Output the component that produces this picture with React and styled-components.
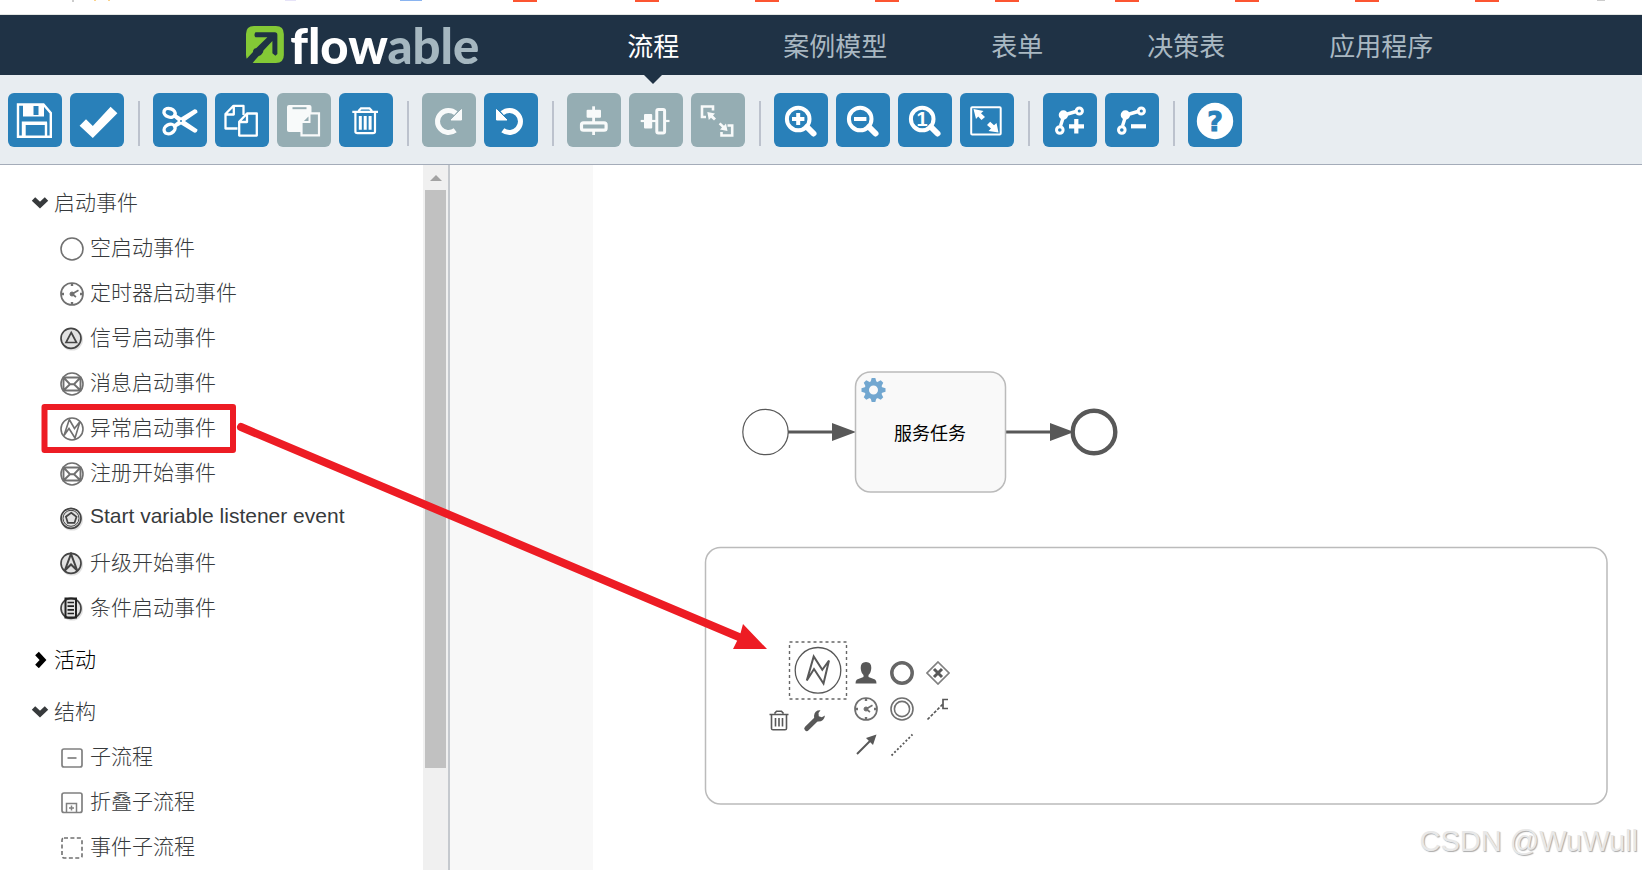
import React from 'react'
import styled, { createGlobalStyle, css } from 'styled-components'

const GlobalStyle = createGlobalStyle`
  *,
  *::before,
  *::after {
    box-sizing: border-box;
  }

  body {
    margin: 0;
    background: #fff;
    color: #373a3c;
    font-family: 'Liberation Sans', 'Noto Sans CJK SC', sans-serif;
    overflow: hidden;
  }

  button {
    padding: 0;
    border: 0;
    background: none;
    color: inherit;
    font: inherit;
    cursor: pointer;
  }
`

const INK = '#585858'
const RED = '#ed1c24'

/* Toolbar drawings, all on a 54 x 54 grid */

const Lens = ({ children }) => (
  <>
    <circle cx="24.2" cy="26" r="11.3" fill="none" stroke="#fff" strokeWidth="4" />
    <path d="M33 34L39.5 40.5" stroke="#fff" strokeWidth="6" strokeLinecap="round" />
    {children}
  </>
)

const Bend = () => (
  <g fill="none" stroke="#fff" strokeWidth="3">
    <path d="M33 18.5L21 22L17.5 33" strokeWidth="3.4" />
    <circle cx="36.3" cy="18" r="3.1" />
    <circle cx="20.4" cy="22" r="3.2" fill="#fff" />
    <circle cx="16.8" cy="37" r="3.3" />
  </g>
)

const Turn = () => (
  <>
    <path
      d="M33.2 37.2A11 11 0 1 1 33.8 20.2"
      fill="none"
      stroke="#fff"
      strokeWidth="5"
    />
    <path d="M39.5 16.5V27H29z" fill="#fff" stroke="#fff" strokeLinejoin="round" />
  </>
)

const toolIcons = {
  save: (
    <g fill="none" stroke="#fff" strokeWidth="2.4">
      <path d="M10 11.5H35.5L42.8 20V43.8H10z" />
      <path d="M15 11H36V23.5H15z" fill="#fff" stroke="none" />
      <path d="M25.5 13H30.5V22H25.5z" fill="#2980b9" stroke="none" />
      <path d="M16.5 44V30.8H38V44M15 44V29.6H39" />
    </g>
  ),
  check: <path d="M9.6 32.7L16 26.3L22.8 33L40.6 13.7L47.4 20.3L22.8 45z" fill="#fff" />,
  cut: (
    <>
      <g fill="none" stroke="#fff" strokeWidth="3.4">
        <ellipse cx="16.6" cy="19.8" rx="5.8" ry="4.2" transform="rotate(20 16.6 19.8)" />
        <ellipse cx="16.6" cy="36" rx="5.8" ry="4.4" transform="rotate(-28 16.6 36)" />
      </g>
      <path
        d="M21 20L28 24.5L41 16.4Q44.5 16 44.5 19.5L32 28L44.5 36.5Q44.5 40 41 39.6L28 31.5L21 35.5L19.5 32.5L25 28L19.5 23.5z"
        fill="#fff"
      />
      <circle cx="28" cy="28" r="1" fill="#2980b9" />
    </>
  ),
  copy: (
    <g fill="none" stroke="#fff" strokeWidth="2.3" strokeLinejoin="round">
      <path d="M22.5 35.5H10.5V21L18.5 12.8H28.5V22M11 21.5H18.8V13.5" />
      <path d="M24.2 28.8L32 20.5H41.8V42.6H24.2zM24.5 29H32V21" />
    </g>
  ),
  paste: (
    <>
      <rect x="10" y="12" width="24.5" height="27" rx="2" fill="#fff" />
      <path d="M15.5 15.2H29.5" stroke="#95adb3" strokeWidth="2" />
      <path
        d="M24.5 28L32 20.3H42V42.3H24.5z"
        fill="#95adb3"
        stroke="#fff"
        strokeWidth="2.2"
      />
      <path d="M24.5 29H32.5V21z" fill="#95adb3" stroke="#fff" strokeWidth="2" />
    </>
  ),
  trash: (
    <g fill="none" stroke="#fff" strokeWidth="2.2">
      <path d="M13.3 18.8H39M16.4 19V38.5Q16.4 40.2 18.5 40.2H34Q36 40.2 36 38.5V19M19.5 18L22 15.3H30.5L33 18" />
      <path d="M21.3 23V36.8M26.2 23V36.8M31.1 23V36.8" strokeWidth="3" />
    </g>
  ),
  redo: <Turn />,
  undo: (
    <g transform="translate(52 0) scale(-1 1)">
      <Turn />
    </g>
  ),
  alignVertical: (
    <>
      <path d="M26.6 13.3V42" stroke="#fff" strokeWidth="2.8" />
      <rect x="19.6" y="16.7" width="14.4" height="8" rx="1" fill="#fff" />
      <rect x="14.5" y="29.8" width="24.6" height="7.4" rx="2" fill="#95adb3" stroke="#fff" strokeWidth="3.2" />
    </>
  ),
  alignHorizontal: (
    <>
      <path d="M11.7 28H40.5" stroke="#fff" strokeWidth="2.2" />
      <rect x="15" y="21" width="8.2" height="14.4" rx="1" fill="#fff" />
      <rect x="27.8" y="16.5" width="7.8" height="23.4" rx="1.5" fill="#95adb3" stroke="#fff" strokeWidth="3" />
    </>
  ),
  sameSize: (
    <g fill="#fff">
      <path
        d="M15 24H11V13.5H22V17.5M36.5 32.5H41.2V42.5H30.5V39"
        fill="none"
        stroke="#fff"
        strokeWidth="2.6"
      />
      <path d="M16.3 19L24 20.5L22 22.5L25 25.5L23 27.5L20 24.7L17.8 27z" />
      <path d="M36.5 38L29 36.5L31 34.5L27.7 31.3L29.5 29.5L33 32.7L35 30.5z" />
    </g>
  ),
  zoomIn: (
    <Lens>
      <path d="M18 26H30.4M24.2 20V32" stroke="#fff" strokeWidth="4" />
    </Lens>
  ),
  zoomOut: (
    <Lens>
      <path d="M18 26H30.4" stroke="#fff" strokeWidth="4" />
    </Lens>
  ),
  zoomActual: (
    <Lens>
      <text x="24" y="33" fontSize="20" fontWeight="700" textAnchor="middle" fill="#fff">
        1
      </text>
    </Lens>
  ),
  zoomFit: (
    <g fill="#fff">
      <rect x="11.2" y="14.2" width="29.5" height="27.4" rx="1" fill="none" stroke="#fff" strokeWidth="2" />
      <path d="M13.5 16L23.5 18L21 20.2L25 24L21.5 27L18.2 23.5L16 26z" />
      <path d="M38.5 39.5L28.5 38L31 35.5L27 32L30.2 28.8L34 32.2L36.5 30z" />
    </g>
  ),
  bendAdd: (
    <>
      <Bend />
      <path d="M26 33.3H41M33.3 26V40.5" stroke="#fff" strokeWidth="4.2" />
    </>
  ),
  bendRemove: (
    <>
      <Bend />
      <path d="M26 33.3H41" stroke="#fff" strokeWidth="4.2" />
    </>
  ),
  help: (
    <>
      <circle cx="27" cy="28" r="18.2" fill="#fff" />
      <text
        x="27"
        y="37.5"
        fontSize="27"
        fontWeight="700"
        fontFamily="DejaVu Sans"
        textAnchor="middle"
        fill="#2980b9"
        stroke="#2980b9"
      >
        ?
      </text>
    </>
  ),
}

/* Shape drawings, all on a 24 x 24 grid */

const ShadedRing = ({ children }) => (
  <g fill="none" stroke="#444" strokeWidth="1.7">
    <circle cx="12" cy="12.6" r="11" fill="#ccc" stroke="none" opacity="0.6" />
    <circle cx="11" cy="11.3" r="10" fill="#e2e2e2" />
    {children}
  </g>
)

const Envelope = () => (
  <g fill="none" stroke="#707070" strokeWidth="1.6">
    <circle cx="12" cy="12" r="11" />
    <path
      d="M3.5 5.5H20.5V18.5H3.5zM3.5 5.5L10 12.2H14L20.5 5.5M3.5 18.5L10 12.2M20.5 18.5L14 12.2"
      strokeWidth="1.9"
    />
  </g>
)

const shapeIcons = {
  none: <circle cx="12" cy="12" r="11" fill="none" stroke="#707070" strokeWidth="1.6" />,
  timer: (
    <g fill="none" stroke="#707070">
      <circle cx="12" cy="12" r="11" strokeWidth="1.7" />
      <path d="M12 1V4M12 20V23M1 12H4M20 12H23" strokeWidth="2.4" />
      <path d="M12 12L18.5 8.2M12 12L16 15" strokeWidth="1.6" />
      <circle cx="12" cy="12" r="2" fill="#707070" />
    </g>
  ),
  signal: (
    <ShadedRing>
      <path d="M11.2 5.5L16.5 15.5H6z" />
    </ShadedRing>
  ),
  message: <Envelope />,
  error: (
    <g fill="none" stroke="#707070" strokeWidth="1.6">
      <circle cx="12" cy="12" r="11" />
      <path d="M4 18.5L9.3 2.5L14.5 11.5L20 4.5L15 21L9 11.5z" />
    </g>
  ),
  variable: (
    <ShadedRing>
      <circle cx="11" cy="11.3" r="8" strokeWidth="1" />
      <path d="M11.2 5.8L16.5 9.7L14.5 15.8H7.8L5.9 9.7z" />
    </ShadedRing>
  ),
  escalation: (
    <ShadedRing>
      <path d="M11 1.8L17.2 18.5L11 12.5L4.8 18.5z" strokeWidth="2" />
    </ShadedRing>
  ),
  conditional: (
    <ShadedRing>
      <rect x="5.5" y="1.5" width="10.5" height="19" stroke="#222" strokeWidth="2" />
      <path d="M7.5 5.5H14M7.5 9.2H14M7.5 12.8H14M7.5 16.5H14" stroke="#222" />
    </ShadedRing>
  ),
  subProcess: (
    <g fill="none" stroke="#808080" strokeWidth="1.7">
      <rect x="2" y="3" width="20" height="18" rx="2" />
      <path d="M7.5 12H16.5" />
    </g>
  ),
  collapsed: (
    <g fill="none" stroke="#808080" strokeWidth="1.7">
      <rect x="2" y="2" width="20" height="19.5" rx="2" />
      <path d="M6.5 21V12.5H16.5V21M11.5 14.5V19.5M9 17H14" strokeWidth="1.5" />
    </g>
  ),
  eventSubProcess: (
    <rect
      x="2"
      y="2"
      width="20"
      height="20"
      rx="2"
      fill="none"
      stroke="#707070"
      strokeWidth="1.6"
      strokeDasharray="4 2.4"
    />
  ),
  user: (
    <path
      d="M12 1Q17.5 1 17.3 7Q17 12 14.5 14V16L21 18.5Q22.5 19.5 22.5 22.5H1.5Q1.5 19.5 3 18.5L9.5 16V14Q7 12 6.7 7Q6.5 1 12 1z"
      fill={INK}
    />
  ),
  end: <circle cx="12" cy="12" r="10.2" fill="none" stroke="#666" strokeWidth="3.5" />,
  gateway: (
    <g fill="none" stroke="#808080" strokeWidth="1.7">
      <path d="M12 1L23 12L12 23L1 12z" />
      <path d="M8 8L16 16M16 8L8 16" stroke={INK} strokeWidth="3" />
    </g>
  ),
  intermediate: (
    <g fill="none" stroke="#707070" strokeWidth="1.6">
      <circle cx="12" cy="12" r="11" />
      <circle cx="12" cy="12" r="7.6" />
    </g>
  ),
  annotation: (
    <g fill="none" stroke={INK} strokeWidth="1.7">
      <path d="M22 2.5H17V11.5H22" />
      <path d="M1.5 22.5L17 7" strokeDasharray="3 1.6" />
    </g>
  ),
  flow: (
    <>
      <path d="M3 21L16 8" stroke={INK} strokeWidth="2" />
      <path d="M22.5 1.5L12 5L19 12z" fill={INK} />
    </>
  ),
  association: (
    <path d="M1.5 22.5L22.5 1.5" stroke={INK} strokeWidth="1.8" strokeDasharray="2 2" />
  ),
  remove: (
    <g fill="none" stroke={INK} strokeWidth="1.6">
      <path d="M2.5 5.5H21.5M4.5 6V19.5Q4.5 20.8 6 20.8H18Q19.5 20.8 19.5 19.5V6M7.5 4.5L9.5 2.2H14.5L16.5 4.5" />
      <path d="M8.5 9V17.5M12 9V17.5M15.5 9V17.5" />
    </g>
  ),
  wrench: (
    <>
      <path d="M3.8 19.5L13.5 10" stroke={INK} strokeWidth="5" strokeLinecap="round" />
      <path
        d="M17.5 1.3Q11.5 1 11 7L11.5 10.5L14.5 12.5Q21 13 22 6.5L18.8 8.3L15.8 7.3L15.5 4z"
        fill={INK}
      />
    </>
  ),
}

const Drawing = ({ name }) => (
  <svg width="24" height="24" viewBox="0 0 24 24" aria-hidden="true">
    {shapeIcons[name]}
  </svg>
)

const toolGroups = [
  [
    { icon: 'save', label: '保存' },
    { icon: 'check', label: '校验' },
  ],
  [
    { icon: 'cut', label: '剪切' },
    { icon: 'copy', label: '复制' },
    { icon: 'paste', label: '粘贴', disabled: true },
    { icon: 'trash', label: '删除' },
  ],
  [
    { icon: 'redo', label: '重做', disabled: true },
    { icon: 'undo', label: '撤销' },
  ],
  [
    { icon: 'alignVertical', label: '垂直对齐', disabled: true },
    { icon: 'alignHorizontal', label: '水平对齐', disabled: true },
    { icon: 'sameSize', label: '相同大小', disabled: true },
  ],
  [
    { icon: 'zoomIn', label: '放大' },
    { icon: 'zoomOut', label: '缩小' },
    { icon: 'zoomActual', label: '实际大小' },
    { icon: 'zoomFit', label: '适合大小' },
  ],
  [
    { icon: 'bendAdd', label: '添加弯曲点' },
    { icon: 'bendRemove', label: '删除弯曲点' },
  ],
  [{ icon: 'help', label: '帮助' }],
]

const palette = [
  {
    title: '启动事件',
    open: true,
    items: [
      ['none', '空启动事件'],
      ['timer', '定时器启动事件'],
      ['signal', '信号启动事件'],
      ['message', '消息启动事件'],
      ['error', '异常启动事件'],
      ['message', '注册开始事件'],
      ['variable', 'Start variable listener event'],
      ['escalation', '升级开始事件'],
      ['conditional', '条件启动事件'],
    ],
  },
  { title: '活动', open: false, items: [] },
  {
    title: '结构',
    open: true,
    items: [
      ['subProcess', '子流程'],
      ['collapsed', '折叠子流程'],
      ['eventSubProcess', '事件子流程'],
    ],
  },
]

const quickActions = [
  { icon: 'user', x: 261, y: 496 },
  { icon: 'end', x: 297, y: 496 },
  { icon: 'gateway', x: 333, y: 496 },
  { icon: 'timer', x: 261, y: 532 },
  { icon: 'intermediate', x: 297, y: 532 },
  { icon: 'annotation', x: 333, y: 532 },
  { icon: 'flow', x: 261, y: 568 },
  { icon: 'association', x: 297, y: 568 },
  { icon: 'remove', x: 174, y: 544 },
  { icon: 'wrench', x: 210, y: 544 },
]

const Chevron = ({ open }) => (
  <svg width="18" height="18" viewBox="0 0 18 18" aria-hidden="true">
    <path
      d={open ? 'M2.5 6L9 12L15.5 6' : 'M6 3.5L12 10L6 16.5'}
      fill="none"
      stroke="currentColor"
      strokeWidth="5"
    />
  </svg>
)

const gearTeeth = [0, 45, 90, 135, 180, 225, 270, 315]

const Gear = () => (
  <g transform="translate(280.5 225)">
    <circle r="6.8" fill="none" stroke="#72a7d0" strokeWidth="4.6" />
    {gearTeeth.map((angle) => (
      <path
        key={angle}
        d="M-3 -8L-1.8 -12H1.8L3 -8z"
        fill="#72a7d0"
        transform={`rotate(${angle})`}
      />
    ))}
  </g>
)

const Diagram = () => (
  <DiagramSvg>
    <g fill="none" stroke={INK}>
      <circle cx="172.5" cy="267" r="22.7" strokeWidth="1.2" fill="#fff" />
      <circle cx="501" cy="267" r="21.3" strokeWidth="4.4" fill="#fff" />
      <path d="M195 267H240M412 267H458" strokeWidth="3" />
    </g>
    <path d="M239 258L263 267L239 276zM457 258L481 267L457 276z" fill={INK} />
    <rect x="262.5" y="207" width="150" height="120" rx="15" fill="#f9f9f9" stroke="#bbb" strokeWidth="1.5" />
    <Gear />
    <text x="337" y="275" fontSize="18" textAnchor="middle" fill="#000">
      服务任务
    </text>
    <rect x="112.5" y="382.5" width="901.5" height="256.5" rx="15" fill="none" stroke="#bbb" strokeWidth="1.5" />
    <rect
      x="196.5"
      y="477"
      width="57"
      height="57"
      fill="none"
      stroke="#666"
      strokeWidth="1.4"
      strokeDasharray="3 3"
    />
    <circle cx="225" cy="505.3" r="22.8" fill="#fff" stroke={INK} strokeWidth="1.3" />
    <path
      d="M213.8 515.5L220.7 491.5L229.3 504.8L236 495.5L230.5 518.5L221 504z"
      fill="none"
      stroke={INK}
      strokeWidth="2"
    />
  </DiagramSvg>
)

const Logo = () => (
  <LogoLink href="#/processes" aria-label="flowable">
    <svg width="39" height="38" viewBox="0 0 39 38" aria-hidden="true">
      <path
        d="M8 0H30Q38 0 38 8V29Q38 37 30 37H8Q0 37 0 29V8Q0 0 8 0z"
        fill="#84c936"
      />
      <path
        d="M9.5 6.3H29Q31.5 6.3 31.5 9V28L29.5 29.7L26.5 27.3V15L17.5 24.5L17 26.5Q15.5 29.5 12.5 30.2L5.8 38H0V33.5L7 26Q7 22.8 10.4 22L21.5 11.2H9.5Q7.5 9 9.5 6.3z"
        fill="#1f3245"
      />
    </svg>
    <Wordmark>
      flow<span>able</span>
    </Wordmark>
  </LogoLink>
)

export default function App() {
  return (
    <Page>
      <GlobalStyle />
      <BrowserStrip aria-hidden="true">
        <svg width="100%" height="2">
          <path d="M72 0H74V2H72zM1597 0H1605V1H1597z" fill="#ccc" />
          <path d="M94 0H96V1H94zM108 0H110V1H108z" fill="#fbd38b" />
          <path d="M285 0H296V1H285z" fill="#e6e3f8" />
          <path d="M400 0H422V1H400z" fill="#8ab4f0" />
          {[...Array(9).keys()].map((i) => (
            <rect key={i} x={513 + i * 120 + (i ? 2 : 0)} width="24" height="2" fill="#fc5531" />
          ))}
        </svg>
      </BrowserStrip>

      <Header>
        <Logo />
        <Nav>
          <NavLink href="#/processes" $active>
            流程
          </NavLink>
          <NavLink href="#/casemodels">案例模型</NavLink>
          <NavLink href="#/forms">表单</NavLink>
          <NavLink href="#/decisions">决策表</NavLink>
          <NavLink href="#/apps">应用程序</NavLink>
        </Nav>
      </Header>

      <Toolbar role="toolbar">
        {toolGroups.map((group, i) => (
          <React.Fragment key={group[0].icon}>
            {i > 0 && <Separator />}
            <ToolGroup>
              {group.map((tool) => (
                <ToolButton
                  key={tool.icon}
                  type="button"
                  aria-label={tool.label}
                  disabled={tool.disabled}
                >
                  <svg width="54" height="54" viewBox="0 0 54 54" aria-hidden="true">
                    {toolIcons[tool.icon]}
                  </svg>
                </ToolButton>
              ))}
            </ToolGroup>
          </React.Fragment>
        ))}
      </Toolbar>

      <Editor>
        <Palette>
          {palette.map((section) => (
            <section key={section.title}>
              <SectionTitle type="button" aria-expanded={section.open} $open={section.open}>
                <Chevron open={section.open} />
                <Label>{section.title}</Label>
              </SectionTitle>
              {section.open && (
                <ShapeList>
                  {section.items.map(([icon, label]) => (
                    <ShapeItem key={label}>
                      <Drawing name={icon} />
                      <Label>{label}</Label>
                    </ShapeItem>
                  ))}
                </ShapeList>
              )}
            </section>
          ))}
        </Palette>
        <ScrollTrack aria-hidden="true">
          <ScrollArrow />
          <ScrollRail>
            <ScrollThumb />
          </ScrollRail>
        </ScrollTrack>
        <Canvas>
          <Paper>
            <Diagram />
            {quickActions.map(({ icon, x, y }) => (
              <QuickAction key={icon} type="button" aria-label={icon} $x={x} $y={y}>
                <Drawing name={icon} />
              </QuickAction>
            ))}
          </Paper>
        </Canvas>
        <Annotation aria-hidden="true">
          <rect
            x="44.5"
            y="242"
            width="188.5"
            height="43"
            fill="none"
            stroke={RED}
            strokeWidth="6"
            strokeLinejoin="round"
          />
          <path d="M241 262L746 475" stroke={RED} strokeWidth="8" strokeLinecap="round" />
          <path d="M767 484L743 459L740 470L733 484z" fill={RED} />
        </Annotation>
        <Watermark>CSDN @WuWull</Watermark>
      </Editor>
    </Page>
  )
}

const Page = styled.div`
  display: flex;
  flex-direction: column;
  height: 100vh;
`

const BrowserStrip = styled.div`
  flex: none;
  height: 15px;
  border-bottom: 1px solid #e3e6e3;

  svg {
    display: block;
  }
`

const Header = styled.header`
  flex: none;
  display: flex;
  align-items: stretch;
  gap: 96px;
  height: 60px;
  padding-left: 15%;
  background: #1f3245;
`

const LogoLink = styled.a`
  display: flex;
  align-items: center;
  gap: 5px;
  width: 233px;
  text-decoration: none;
`

const Wordmark = styled.span`
  color: #fff;
  font: 900 49px/60px Lato, sans-serif;
  font-variant-ligatures: none;

  span {
    color: #a5b7c0;
  }
`

const Nav = styled.nav`
  display: flex;
`

const NavLink = styled.a`
  position: relative;
  padding: 0 52px;
  color: #a9b8c2;
  font-size: 26px;
  line-height: 64px;
  white-space: nowrap;
  text-decoration: none;

  ${({ $active }) =>
    $active &&
    css`
      color: #fff;

      &::after {
        content: '';
        position: absolute;
        top: 60px;
        left: calc(50% - 9px);
        border: 9px solid transparent;
        border-top-color: #1f3245;
        border-bottom: 0;
      }
    `}
`

const Toolbar = styled.div`
  flex: none;
  display: flex;
  align-items: center;
  height: 90px;
  padding: 0 8px;
  background: #e8edf1;
  border-bottom: 1px solid #a4acb9;
`

const ToolGroup = styled.div`
  display: flex;
  gap: 8px;
`

const Separator = styled.div`
  width: 2px;
  height: 45px;
  margin: 8px 13px 0 14px;
  background: #bcc2cd;
`

const ToolButton = styled.button`
  width: 54px;
  height: 54px;
  border-radius: 6px;
  background: #2980b9;

  &:disabled {
    background: #95adb3;
    cursor: default;
  }

  svg {
    display: block;
  }

  &:disabled svg {
    opacity: 0.94;
  }
`

const Editor = styled.main`
  position: relative;
  flex: 1;
  display: flex;
  min-height: 0;
  overflow: hidden;
`

const Palette = styled.aside`
  flex: none;
  width: 423px;
  padding: 8px 0 0 29px;
  overflow: hidden;
  font-size: 21px;
  font-weight: 300;
`

const SectionTitle = styled.button`
  display: flex;
  align-items: center;
  gap: 5px;
  height: 52px;
  padding: 6px 0 0 2px;
  color: ${({ $open }) => ($open ? '#373a3c' : '#000')};
`

const Label = styled.span`
  padding-bottom: 3px;
`

const ShapeList = styled.ul`
  margin: 0;
  padding: 0 0 0 31px;
  list-style: none;
`

const ShapeItem = styled.li`
  display: flex;
  align-items: center;
  gap: 6px;
  height: 45px;
  white-space: nowrap;

  svg {
    margin-top: 2px;
  }
`

const ScrollTrack = styled.div`
  flex: none;
  display: flex;
  flex-direction: column;
  width: 27px;
  padding: 0 2px;
  background: #f0f0f0;
  border-right: 2px solid #c5c9ce;
`

const ScrollArrow = styled.div`
  flex: none;
  display: flex;
  justify-content: center;
  height: 25px;
  padding-top: 10px;

  &::before {
    content: '';
    height: 0;
    border: 6px solid transparent;
    border-top: 0;
    border-bottom-color: #a3a3a3;
  }
`

const ScrollRail = styled.div`
  flex: 1;
`

const ScrollThumb = styled.div`
  height: 85%;
  background: #c1c1c1;
`

const Canvas = styled.div`
  flex: 1;
  display: flex;
  min-width: 0;
  padding-left: 143px;
  background: #f8f8f8;
`

const Paper = styled.div`
  position: relative;
  flex: 1;
  overflow: hidden;
  background: #fff;
`

const DiagramSvg = styled.svg`
  display: block;
  width: 100%;
  height: 100%;
`

const QuickAction = styled.button`
  position: absolute;
  left: ${({ $x }) => $x}px;
  top: ${({ $y }) => $y}px;
  width: 24px;
  height: 24px;

  svg {
    display: block;
  }
`

const Annotation = styled.svg`
  position: absolute;
  inset: 0;
  width: 100%;
  height: 100%;
  pointer-events: none;
`

const Watermark = styled.div`
  position: absolute;
  right: 4px;
  bottom: 12px;
  color: #e8e8e8;
  font-size: 29px;
  line-height: 34px;
  text-shadow: 1px 1px 1px #aaa;
`
